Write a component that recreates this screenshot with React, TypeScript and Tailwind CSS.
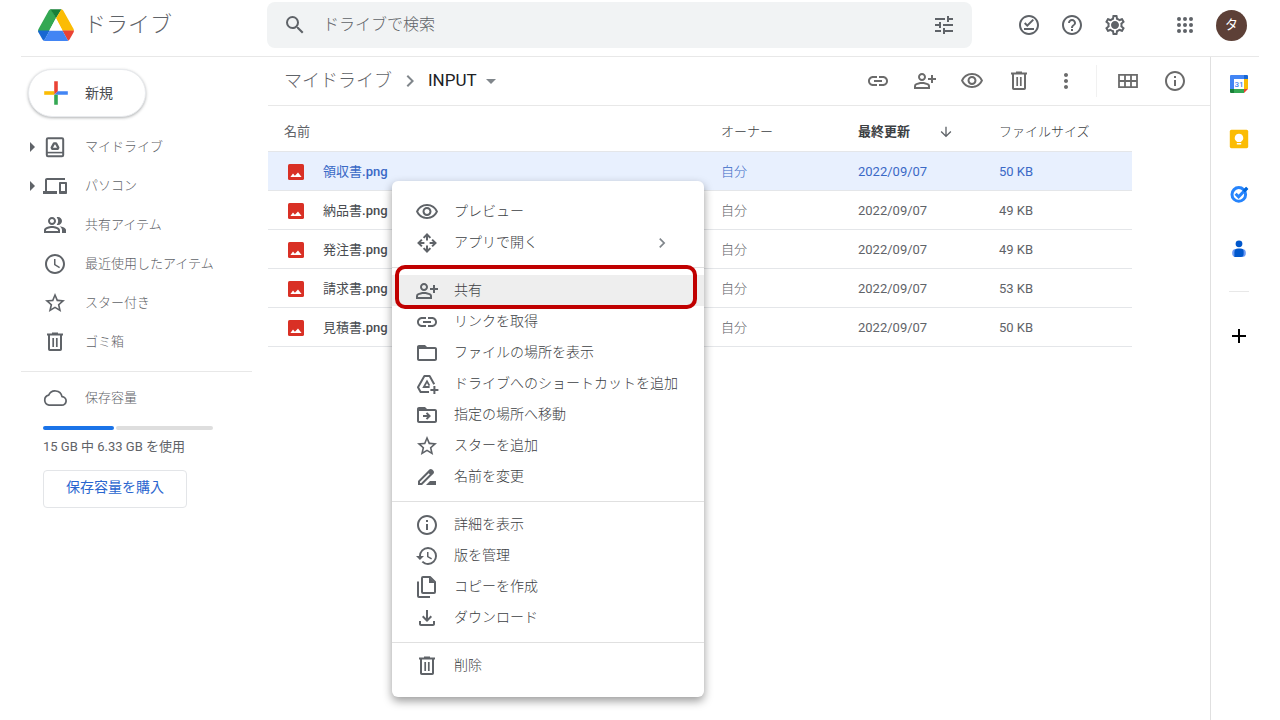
import React from "react";
import {
  MdSearch,
  MdTune,
  MdOutlineOfflinePin,
  MdHelpOutline,
  MdOutlineSettings,
  MdLink,
  MdOutlinePersonAddAlt,
  MdOutlineVisibility,
  MdMoreVert,
  MdInfoOutline,
  MdOutlineDevices,
  MdOutlinePeopleAlt,
  MdAccessTime,
  MdStarBorder,
  MdArrowDownward,
  MdChevronRight,
  MdArrowDropDown,
  MdArrowRight,
  MdHistory,
  MdOutlineFileDownload,
  MdAdd,
} from "react-icons/md";

type IconProps = { className?: string };
type IconType = React.ComponentType<IconProps>;

function DriveLogo() {
  return (
    <svg viewBox="0 0 36 32" className="h-8 w-9" aria-hidden="true">
      <path fill="#34a853" d="M12.6 0.2 H13 L18 9 L6.5 30.5 L0.4 22.8 Q-.2 21.4 .5 20 L10.8 1.6 Q11.4.4 12.6.2Z" />
      <path fill="#188038" d="M12.4 0.2 H23.6 L18 9.2Z" />
      <path fill="#fbbc04" d="M23.4 0.2 Q24.6.4 25.2 1.5 L35.6 20 Q36 21 35.8 21.8 H24.4 L18 9.2Z" />
      <path fill="#1967d2" d="M0.1 21.6 H11.6 L6 31.8 Q5 31.4 4.5 30.6 L0.5 23.6 Q0 22.6 .1 21.6Z" />
      <path fill="#ea4335" d="M24.4 21.6 H35.9 Q36 22.8 35.5 23.6 L31.5 30.6 Q31 31.4 30 31.8Z" />
      <path fill="#4285f4" d="M11.6 21.6 H24.4 L30.1 31.8 Q29.4 32 28.8 32 H7.2 Q6.6 32 5.9 31.8Z" />
      <path fill="#fff" d="M18 9.2 L24.6 21.6 H11.4Z" />
    </svg>
  );
}

function PlusLogo() {
  return (
    <svg viewBox="0 0 24 24" className="size-6" aria-hidden="true">
      <path fill="#ea4335" d="M10.2 0.2h3.6v10.2l-3.6 3.4z" />
      <path fill="#fbbc04" d="M0.2 10.2h10v3.6h-10z" />
      <path fill="#4285f4" d="M13.8 10.2h10v3.6h-10l-3.4 0z" />
      <path fill="#34a853" d="M10.2 13.8h3.6v10h-3.6z" />
    </svg>
  );
}

function TrashIcon({ className }: IconProps) {
  return (
    <svg viewBox="0 0 24 24" className={className} fill="none" stroke="currentColor" strokeWidth="2" aria-hidden="true">
      <path d="M4 4.6h16M9 3.6h6M6 5v14.2q0 .8.8.8h10.4q.8 0 .8-.8V5" />
      <path d="M10.2 8v9M13.8 8v9" strokeWidth="1.7" />
    </svg>
  );
}

function MyDriveIcon({ className }: IconProps) {
  return (
    <svg viewBox="0 0 24 24" className={className} fill="none" stroke="currentColor" aria-hidden="true">
      <rect x="3.8" y="3.2" width="16.4" height="18" rx="1.2" strokeWidth="2" />
      <path d="M4 17.6h16" strokeWidth="1.6" />
      <path d="M11 8.4h2l2.3 4.2-.7 1.2H9.4l-.7-1.2z" strokeWidth="2.3" strokeLinejoin="round" />
    </svg>
  );
}

function SettingsIcon({ className }: IconProps) {
  return (
    <span className="relative">
      <MdOutlineSettings className={className} />
      <span className="absolute inset-0 m-auto size-1.5 rounded-full bg-current" />
    </span>
  );
}

function AppsIcon({ className }: IconProps) {
  return (
    <svg viewBox="0 0 24 24" className={className} fill="currentColor" aria-hidden="true">
      {[6, 12, 18].map((y) => [6, 12, 18].map((x) => <circle key={`${x}-${y}`} cx={x} cy={y} r="2" />))}
    </svg>
  );
}

function GridIcon({ className }: IconProps) {
  return (
    <svg viewBox="0 0 24 24" className={className} fill="none" stroke="currentColor" strokeWidth="1.8" aria-hidden="true">
      <path d="M3 5.8h18v12.4H3zM9 5.8v12.4M15 5.8v12.4M3 12h18" />
    </svg>
  );
}

function CloudIcon({ className }: IconProps) {
  return (
    <svg viewBox="0 0 24 24" className={className} fill="none" stroke="currentColor" strokeWidth="1.7" aria-hidden="true">
      <path d="M6 19.2h12.6a4.3 4.3 0 0 0 .4-8.6 7 7 0 0 0-13.3-1.4A5.1 5.1 0 0 0 6 19.2z" strokeLinejoin="round" />
    </svg>
  );
}

function OpenWithIcon({ className }: IconProps) {
  return (
    <svg viewBox="0 0 24 24" className={className} fill="none" stroke="currentColor" strokeWidth="2" aria-hidden="true">
      <path d="M8.6 6.9 12 3.5l3.4 3.4M12 4v5.4M8.6 17.1 12 20.5l3.4-3.4M12 20v-5.4M6.9 8.6 3.5 12l3.4 3.4M4 12h5.4M17.1 8.6 20.5 12l-3.4 3.4M20 12h-5.4" />
    </svg>
  );
}

function AddToDriveIcon({ className }: IconProps) {
  return (
    <svg viewBox="0 0 24 24" className={className} fill="none" stroke="currentColor" strokeWidth="2" aria-hidden="true">
      <path d="M19.2 12.2 14.6 4H9.4L3 15.2 5.6 20H14" strokeLinejoin="round" />
      <path d="M14.6 15H8.8L12 9.4l2.4 4.2" strokeWidth="1.8" />
      <path d="M19.4 14v8M15.4 18h8" />
    </svg>
  );
}

function FolderIcon({ className }: IconProps) {
  return (
    <svg viewBox="0 0 24 24" className={className} fill="currentColor" aria-hidden="true">
      <path d="M20 6h-8l-2-2H4c-1.1 0-2 .9-2 2v12c0 1.1.9 2 2 2h16c1.1 0 2-.9 2-2V8c0-1.1-.9-2-2-2zm0 12H4V8h16v10z" />
    </svg>
  );
}

function FolderMoveIcon({ className }: IconProps) {
  return (
    <svg viewBox="0 0 24 24" className={className} fill="currentColor" aria-hidden="true">
      <path d="M20 6h-8l-2-2H4c-1.1 0-2 .9-2 2v12c0 1.1.9 2 2 2h16c1.1 0 2-.9 2-2V8c0-1.1-.9-2-2-2zm0 12H4V8h16v10z" />
      <path d="M12.2 9.2 16 13l-3.8 3.8-1.4-1.4 1.4-1.4H8v-2h4.2l-1.4-1.4z" />
    </svg>
  );
}

function RenameIcon({ className }: IconProps) {
  return (
    <svg viewBox="0 0 24 24" className={className} fill="currentColor" aria-hidden="true">
      <path d="M18.41 5.8 17.2 4.59c-.78-.78-2.05-.78-2.83 0l-2.68 2.68L3 15.96V20h4.04l8.74-8.74 2.63-2.63c.79-.78.79-2.05 0-2.83zM6.21 18H5v-1.21l8.66-8.66 1.21 1.21L6.21 18zM11 20l4-4h6v4H11z" />
    </svg>
  );
}

function CopyIcon({ className }: IconProps) {
  return (
    <svg viewBox="0 0 24 24" className={className} fill="none" stroke="currentColor" strokeWidth="2" aria-hidden="true">
      <path d="M3 6.5V21q0 1 1 1h11" />
      <path d="M8 2h7l5 5v10q0 1-1 1H8q-1 0-1-1V3q0-1 1-1z" strokeLinejoin="round" />
      <path d="M14 2v6h6z" fill="currentColor" stroke="none" />
    </svg>
  );
}

function ImageFileIcon() {
  return (
    <svg viewBox="0 0 16 16" className="size-4 shrink-0" aria-hidden="true">
      <rect width="16" height="16" rx="1.6" fill="#d93025" />
      <path d="M2.4 13 5 9.6l1.9 2.2 3.1-3.4 3.6 4.6z" fill="#fff" />
    </svg>
  );
}

function CalendarLogo() {
  return (
    <svg viewBox="0 0 20 20" className="size-5" aria-hidden="true">
      <path fill="#4285f4" d="M2 1h13v4H5v10H1V2q0-1 1-1z" />
      <path fill="#1967d2" d="M15 1h3q1 0 1 1v3h-4z" />
      <path fill="#fbbc04" d="M15 5h4v10h-4z" />
      <path fill="#34a853" d="M5 15h10v4H5z" />
      <path fill="#188038" d="M1 15h4v4H2q-1 0-1-1z" />
      <path fill="#ea4335" d="M15 15h4l-4 4z" />
      <path fill="#fff" d="M5 5h10v10H5z" />
      <text x="10" y="13" textAnchor="middle" fontSize="8" fontWeight="500" fill="#4285f4" fontFamily="Roboto, sans-serif">
        31
      </text>
    </svg>
  );
}

function KeepLogo() {
  return (
    <svg viewBox="0 0 20 20" className="size-5" aria-hidden="true">
      <rect x="0.8" y="0.8" width="18.4" height="18.4" rx="1.6" fill="#fbbc04" />
      <path fill="#fff" d="M10 4.8a4.2 4.2 0 0 0-2.2 7.8V13h4.4v-.4A4.2 4.2 0 0 0 10 4.8zM7.8 14h4.4v1.5H7.8z" />
    </svg>
  );
}

function TasksLogo() {
  return (
    <svg viewBox="0 0 20 20" className="size-5" fill="none" aria-hidden="true">
      <circle cx="9.8" cy="10.4" r="6.8" stroke="#2684fc" strokeWidth="3" />
      <path d="m6.6 9.8 3 3 8.2-8.6" stroke="#2684fc" strokeWidth="3" />
      <path d="m13.6 6.2 3.6-3.4 2.2 2.2-3.6 3.6z" fill="#0066da" />
    </svg>
  );
}

function ContactsLogo() {
  return (
    <svg viewBox="0 0 20 20" className="size-5" aria-hidden="true">
      <circle cx="10" cy="4.8" r="3.4" fill="#0057cc" />
      <rect x="3.2" y="10" width="13.6" height="8" rx="3.6" fill="#6c9bf5" />
      <path fill="#0057cc" d="M9 9.6h2.6q3 0 3 3V15q0 3-3 3H5.4v-4.8Q5.4 9.6 9 9.6z" />
    </svg>
  );
}

const navItems: { label: string; icon: IconType; expandable?: boolean }[] = [
  { label: "マイドライブ", icon: MyDriveIcon, expandable: true },
  { label: "パソコン", icon: MdOutlineDevices, expandable: true },
  { label: "共有アイテム", icon: MdOutlinePeopleAlt },
  { label: "最近使用したアイテム", icon: MdAccessTime },
  { label: "スター付き", icon: MdStarBorder },
  { label: "ゴミ箱", icon: TrashIcon },
];

const files = [
  { name: "領収書", size: "50 KB", selected: true },
  { name: "納品書", size: "49 KB" },
  { name: "発注書", size: "49 KB" },
  { name: "請求書", size: "53 KB" },
  { name: "見積書", size: "50 KB" },
];

const toolbar: { label: string; icon: IconType }[] = [
  { label: "リンクを取得", icon: MdLink },
  { label: "共有", icon: MdOutlinePersonAddAlt },
  { label: "プレビュー", icon: MdOutlineVisibility },
  { label: "削除", icon: TrashIcon },
  { label: "その他の操作", icon: MdMoreVert },
];

type MenuEntry = { label: string; icon: IconType; submenu?: boolean; active?: boolean };

const menuGroups: MenuEntry[][] = [
  [
    { label: "プレビュー", icon: MdOutlineVisibility },
    { label: "アプリで開く", icon: OpenWithIcon, submenu: true },
  ],
  [
    { label: "共有", icon: MdOutlinePersonAddAlt, active: true },
    { label: "リンクを取得", icon: MdLink },
    { label: "ファイルの場所を表示", icon: FolderIcon },
    { label: "ドライブへのショートカットを追加", icon: AddToDriveIcon },
    { label: "指定の場所へ移動", icon: FolderMoveIcon },
    { label: "スターを追加", icon: MdStarBorder },
    { label: "名前を変更", icon: RenameIcon },
  ],
  [
    { label: "詳細を表示", icon: MdInfoOutline },
    { label: "版を管理", icon: MdHistory },
    { label: "コピーを作成", icon: CopyIcon },
    { label: "ダウンロード", icon: MdOutlineFileDownload },
  ],
  [{ label: "削除", icon: TrashIcon }],
];

function Header() {
  return (
    <header className="flex items-center border-b border-[#e8e8e8] pt-0.5 pb-2">
      <a href="#drive" className="flex w-[246px] shrink-0 items-center gap-2.5 pl-[17px]">
        <DriveLogo />
        <span className="text-[22px] leading-8 font-light text-[#5f6368]">ドライブ</span>
      </a>
      <form className="flex h-[46px] flex-1 items-center rounded-lg bg-[#f1f3f4] px-4" role="search">
        <button type="button" aria-label="検索" className="text-[#5f6368]">
          <MdSearch className="size-6" />
        </button>
        <input
          type="text"
          aria-label="ドライブで検索"
          placeholder="ドライブで検索"
          className="min-w-0 flex-1 bg-transparent px-4 text-base font-light text-[#3c4043] outline-none placeholder:text-[#5f6368]"
        />
        <button type="button" aria-label="検索オプション" className="text-[#5f6368]">
          <MdTune className="size-6" />
        </button>
      </form>
      <div className="flex shrink-0 items-center pr-3 pl-[35px] text-[#5f6368]">
        <button type="button" aria-label="オフライン" className="flex w-[43px] justify-center">
          <MdOutlineOfflinePin className="size-6" />
        </button>
        <button type="button" aria-label="ヘルプ" className="flex w-[43px] justify-center">
          <MdHelpOutline className="size-6" />
        </button>
        <button type="button" aria-label="設定" className="flex w-[43px] justify-center">
          <SettingsIcon className="size-6" />
        </button>
        <button type="button" aria-label="アプリ" className="ml-[33px] flex w-8 justify-center">
          <AppsIcon className="size-6" />
        </button>
        <button
          type="button"
          className="ml-[15px] flex size-[31px] items-center justify-center rounded-full bg-[#5d4037] text-[13px] text-white"
        >
          タ
        </button>
      </div>
    </header>
  );
}

function Sidebar() {
  return (
    <aside className="w-[231px] shrink-0 pt-3 text-[#5f6368]">
      <button
        type="button"
        className="ml-[7px] flex h-12 w-[118px] items-center rounded-full border border-[#e8eaed] bg-white pl-[15px] text-sm text-[#4a4d51] shadow-[0_1px_3px_rgba(60,64,67,0.4)]"
      >
        <PlusLogo />
        <span className="ml-[17px]">新規</span>
      </button>
      <nav className="mt-2.5 text-[13px] font-light">
        {navItems.map(({ label, icon: Icon, expandable }) => (
          <a key={label} href="#nav" className="flex h-[39px] items-center">
            <span className="flex w-[22px] justify-center">{expandable && <MdArrowRight className="size-6 shrink-0" />}</span>
            <Icon className="size-6" />
            <span className="ml-[18px]">{label}</span>
          </a>
        ))}
      </nav>
      <section className="mt-2.5 border-t border-[#e8e8e8] pt-3.5 pl-[22px] text-[13px]">
        <h2 className="flex items-center font-light">
          <CloudIcon className="size-6" />
          <span className="ml-[18px]">保存容量</span>
        </h2>
        <div className="mt-4 flex h-1 w-[170px] gap-0.5" role="img" aria-label="使用量">
          <span className="w-[42%] rounded-full bg-[#1a73e8]" />
          <span className="flex-1 rounded-full bg-[#dedede]" />
        </div>
        <p className="mt-[7px] leading-5">15 GB 中 6.33 GB を使用</p>
        <button type="button" className="mt-[13px] h-[38px] w-[144px] rounded border border-[#e3e5e8] pb-1 text-sm text-[#2a66cf]">
          保存容量を購入
        </button>
      </section>
    </aside>
  );
}

function FileTable() {
  return (
    <div className="pr-[78px]">
      <table className="w-full table-fixed border-separate border-spacing-0 text-left text-[13px] text-[#5f6368]">
        <colgroup>
          <col />
          <col className="w-[137px]" />
          <col className="w-[141px]" />
          <col className="w-[133px]" />
        </colgroup>
        <thead>
          <tr className="h-[46px] text-[#3c4043]">
            <th className="border-b border-[#e4e6e9] pt-1.5 pl-4 font-normal text-[#5f6368]">名前</th>
            <th className="border-b border-[#e4e6e9] pt-1.5 font-light">オーナー</th>
            <th className="border-b border-[#e4e6e9] pt-1.5 font-bold">
              <span className="flex items-center gap-7">
                最終更新
                <MdArrowDownward className="size-4 text-[#5f6368]" />
              </span>
            </th>
            <th className="border-b border-[#e4e6e9] pt-1.5 font-light">ファイルサイズ</th>
          </tr>
        </thead>
        <tbody>
          {files.map((f) => (
            <tr key={f.name} className={f.selected ? "h-[39px] bg-[#e8f0fe] text-[#3a69c6]" : "h-[39px]"}>
              <td className="border-b border-[#e4e6e9] pt-0.5 pl-5">
                <span className="flex items-center">
                  <ImageFileIcon />
                  <span className={f.selected ? "ml-[19px]" : "ml-[19px] text-[#4a4d51]"}>
                    {f.name}
                    <span className="font-medium">.png</span>
                  </span>
                </span>
              </td>
              <td className="border-b border-[#e4e6e9] pt-0.5 font-light">自分</td>
              <td className="border-b border-[#e4e6e9] pt-0.5">2022/09/07</td>
              <td className="border-b border-[#e4e6e9] pt-0.5">{f.size}</td>
            </tr>
          ))}
        </tbody>
      </table>
    </div>
  );
}

function Main() {
  return (
    <main className="ml-4 min-w-0 flex-1">
      <div className="flex h-[49px] items-center border-b border-[#e8e8e8] pr-3 pl-4">
        <nav className="flex items-center text-[#202124]">
          <a href="#my-drive" className="text-lg font-light text-[#5f6368]">
            マイドライブ
          </a>
          <MdChevronRight className="mx-1.5 size-6 text-[#80868b]" />
          <button type="button" className="flex items-center text-[17px]">
            INPUT
            <MdArrowDropDown className="ml-0.5 size-6 text-[#80868b]" />
          </button>
        </nav>
        <div className="ml-auto flex items-center text-[#6b6b6b]">
          {toolbar.map(({ label, icon: Icon }) => (
            <button key={label} type="button" aria-label={label} className="flex w-[47px] justify-center">
              <Icon className="size-6" />
            </button>
          ))}
          <span className="mx-[7px] h-8 w-px bg-[#f1f1f1]" />
          <button type="button" aria-label="グリッド表示" className="flex w-[47px] justify-center">
            <GridIcon className="size-6" />
          </button>
          <button type="button" aria-label="詳細" className="flex w-[47px] justify-center">
            <MdInfoOutline className="size-6" />
          </button>
        </div>
      </div>
      <FileTable />
    </main>
  );
}

function AppRail() {
  return (
    <aside className="flex w-[49px] shrink-0 flex-col items-center border-l border-[#e0e0e0] pt-[17px] pl-2">
      <div className="flex flex-col gap-[35px]">
        <a href="#calendar" aria-label="カレンダー">
          <CalendarLogo />
        </a>
        <a href="#keep" aria-label="Keep">
          <KeepLogo />
        </a>
        <a href="#tasks" aria-label="ToDo リスト">
          <TasksLogo />
        </a>
        <a href="#contacts" aria-label="連絡先">
          <ContactsLogo />
        </a>
      </div>
      <span className="mt-8 h-px w-5 bg-[#e8e8e8]" />
      <button type="button" aria-label="アドオンを取得" className="mt-8 text-black">
        <MdAdd className="size-6" />
      </button>
    </aside>
  );
}

function ContextMenu() {
  return (
    <div
      role="menu"
      className="absolute top-[181px] left-[392px] w-[312px] rounded-md bg-white pt-[15px] pb-4 shadow-[0_4px_10px_rgba(0,0,0,0.4)]"
    >
      {menuGroups.map((group, i) => (
        <div key={i} className={i === 0 ? "" : "mt-[9px] border-t border-[#e0e0e0] pt-[7px]"}>
          {group.map(({ label, icon: Icon, submenu, active }) => (
            <button
              key={label}
              type="button"
              role="menuitem"
              className={
                active
                  ? "relative flex h-[31px] w-full items-center bg-[#eeeeee] pr-8 pl-[23px] text-sm font-light whitespace-nowrap text-[#3c4043]"
                  : "flex h-[31px] w-full items-center pr-8 pl-[23px] text-sm font-light whitespace-nowrap text-[#3c4043]"
              }
            >
              <Icon className="size-6 shrink-0 text-[#5f6368]" />
              <span className="ml-[15px] pb-0.5">{label}</span>
              {submenu && <MdChevronRight className="ml-auto size-5 text-[#80868b]" />}
              {active && (
                <span className="absolute -top-2.5 right-[7px] -bottom-[3px] left-[3px] rounded-[10px] border-4 border-[#c00000]" />
              )}
            </button>
          ))}
        </div>
      ))}
    </div>
  );
}

export default function App() {
  return (
    <div className="relative flex min-h-screen flex-col bg-white px-[21px] font-[Roboto,'Noto_Sans_CJK_JP',sans-serif]">
      <Header />
      <div className="flex flex-1">
        <Sidebar />
        <Main />
        <AppRail />
      </div>
      <ContextMenu />
    </div>
  );
}
